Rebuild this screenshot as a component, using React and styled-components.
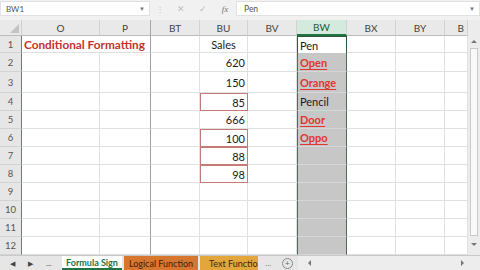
import React from "react";
import styled, { createGlobalStyle, css } from "styled-components";

const Global = createGlobalStyle`
  html, body { margin: 0; padding: 0; background: #ffffff; }
  body { width: 480px; height: 270px; overflow: hidden; font-family: Lato, "Liberation Sans", sans-serif; }
`;

const Page = styled.div`
  width: 480px;
  height: 270px;
  display: flex;
  flex-direction: column;
  background: #f1f1f1;
  overflow: hidden;
`;

const FormulaBar = styled.div`
  height: 20px;
  display: flex;
  align-items: flex-start;
  padding-top: 1px;
  box-sizing: border-box;
  background: #f1f1f1;
`;

const NameBox = styled.div`
  width: 150px;
  height: 15px;
  background: #ffffff;
  border: 1px solid #e2e2e2;
  box-sizing: border-box;
  display: flex;
  align-items: center;
  justify-content: space-between;
  padding: 0 4px 0 5px;
  font-size: 8px;
  color: #555;
`;

const Caret = styled.span`
  font-size: 6px;
  color: #777;
`;

const Tools = styled.div`
  width: 86px;
  height: 15px;
  display: flex;
  align-items: center;
  color: #b5b5b5;
  font-size: 9px;
`;

const Dots = styled.span`
  width: 20px;
  text-align: center;
  color: #c4c4c4;
  font-size: 8px;
`;

const Tool = styled.span`
  width: 22px;
  text-align: center;
  font-style: ${(p) => (p.$italic ? "italic" : "normal")};
  font-family: ${(p) => (p.$italic ? '"Liberation Serif", serif' : "inherit")};
  color: ${(p) => (p.$italic ? "#777" : "#bdbdbd")};
`;

const Input = styled.div`
  flex: 1;
  height: 15px;
  background: #ffffff;
  border: 1px solid #e2e2e2;
  box-sizing: border-box;
  display: flex;
  align-items: center;
  justify-content: space-between;
  padding: 0 4px 0 7px;
  font-size: 8.5px;
  color: #555;
`;

const SheetArea = styled.div`
  display: flex;
  height: 235px;
`;

const COLS = "22px 78px 51px 49px 48px 49px 50px 49px 49px 23px";
const ROWS = "16px 17px 19px 21px 18px 18px 18px 18px 18px 18px 18px 18px 18px";

const Grid = styled.div`
  width: 468px;
  display: grid;
  grid-template-columns: ${COLS};
  grid-template-rows: ${ROWS};
  background: #ffffff;
`;

const Corner = styled.div`
  background: #e9e9e9;
  border-right: 1px solid #cfcfcf;
  border-bottom: 1px solid #bdbdbd;
  position: relative;
  &::after {
    content: "";
    position: absolute;
    right: 2px;
    bottom: 2px;
    border-left: 9px solid transparent;
    border-bottom: 9px solid #c4c4c4;
  }
`;

const ColHead = styled.div`
  background: ${(p) => (p.$active ? "#d3eadc" : "#e9e9e9")};
  border-right: 1px solid ${(p) => (p.$frozen ? "#a8a8a8" : "#d2d2d2")};
  border-bottom: ${(p) => (p.$active ? "2px solid #217346" : "1px solid #bdbdbd")};
  box-sizing: border-box;
  display: flex;
  align-items: center;
  justify-content: ${(p) => (p.$left ? "flex-end" : "center")};
  padding-right: ${(p) => (p.$left ? "3px" : "0")};
  font-size: 10px;
  color: ${(p) => (p.$active ? "#1f5e38" : "#444")};
`;

const RowHead = styled.div`
  background: #e6e6e6;
  border-right: 1px solid #6f7a72;
  border-bottom: 1px solid #d2d2d2;
  box-sizing: border-box;
  display: flex;
  align-items: center;
  justify-content: center;
  font-size: 9.5px;
  color: #555;
`;

const Cell = styled.div`
  box-sizing: border-box;
  grid-column: span ${(p) => p.$span || 1};
  border-right: 1px solid ${(p) => (p.$frozen ? "#a0a0a0" : "#e0e0e0")};
  border-bottom: 1px solid ${(p) => (p.$selected ? "#d6d6d6" : "#e0e0e0")};
  background: ${(p) => (p.$selected ? "#c7c7c7" : "#ffffff")};
  display: flex;
  align-items: center;
  white-space: nowrap;
  overflow: hidden;
  font-size: 11px;
  color: #1a1a1a;
  padding: 0 2px;
  justify-content: ${(p) => (p.$align === "right" ? "flex-end" : p.$align === "center" ? "center" : "flex-start")};
  ${(p) =>
    p.$boxed &&
    css`
      border: 1px solid #c77b76;
    `}
  ${(p) =>
    p.$bw &&
    css`
      border-left: 1.5px solid #4d6b58;
      border-right: 1.5px solid #4d6b58;
    `}
  ${(p) =>
    p.$activeCell &&
    css`
      border: 1.5px solid #2d5a3d;
      border-bottom: none;
      background: #ffffff;
    `}
`;

const Title = styled.span`
  font-weight: 700;
  color: #c3332b;
  font-size: 11.8px;
`;

const RedWord = styled.span`
  font-weight: 700;
  color: #e0362f;
  text-decoration: underline;
  text-underline-offset: 2px;
`;

const VScroll = styled.div`
  width: 12px;
  background: #ececec;
  display: flex;
  flex-direction: column;
  align-items: center;
  padding-top: 17px;
  box-sizing: border-box;
`;

const Arrow = styled.div`
  width: 0;
  height: 0;
  margin: 3px 0;
  border-left: 3px solid transparent;
  border-right: 3px solid transparent;
  ${(p) =>
    p.$dir === "up"
      ? css`border-bottom: 3px solid #777;`
      : css`border-top: 3px solid #777;`}
`;

const Thumb = styled.div`
  width: 8px;
  height: 188px;
  background: #f9f9f9;
  border: 1px solid #c9c9c9;
  box-sizing: border-box;
  margin: 2px 0 4px;
`;

const TabBar = styled.div`
  height: 15px;
  display: flex;
  align-items: stretch;
  background: #e6e6e6;
  border-top: 1px solid #c9c9c9;
  box-sizing: border-box;
`;

const Nav = styled.div`
  width: 62px;
  display: flex;
  align-items: center;
  justify-content: space-around;
  padding: 0 4px;
  box-sizing: border-box;
  font-size: 7px;
  color: #444;
`;

const Tab = styled.div`
  width: ${(p) => p.$w}px;
  margin-right: 2px;
  background: ${(p) => p.$bg};
  display: flex;
  align-items: center;
  justify-content: ${(p) => (p.$clip ? "flex-start" : "center")};
  padding-left: ${(p) => (p.$clip ? "9px" : "0")};
  font-size: 9px;
  font-weight: ${(p) => (p.$active ? 700 : 400)};
  color: ${(p) => p.$fg};
  white-space: nowrap;
  overflow: hidden;
  box-sizing: border-box;
  ${(p) =>
    p.$active &&
    css`
      border-bottom: 2px solid #217346;
    `}
`;

const TabTools = styled.div`
  width: 38px;
  display: flex;
  align-items: center;
  justify-content: space-around;
  font-size: 8px;
  color: #777;
`;

const Plus = styled.span`
  width: 9px;
  height: 9px;
  border: 1px solid #888;
  border-radius: 50%;
  display: flex;
  align-items: center;
  justify-content: center;
  font-size: 8px;
  line-height: 1;
  color: #666;
`;

const HScroll = styled.div`
  flex: 1;
  display: flex;
  align-items: center;
  justify-content: space-between;
  padding: 0 16px 0 10px;
  background: #ededed;
`;

const HArrow = styled.div`
  width: 0;
  height: 0;
  border-top: 3px solid transparent;
  border-bottom: 3px solid transparent;
  ${(p) =>
    p.$dir === "left"
      ? css`border-right: 3px solid #777;`
      : css`border-left: 3px solid #777;`}
`;

const colNames = ["O", "P", "BT", "BU", "BV", "BW", "BX", "BY", "B"];

const data = {
  1: { O: { v: <Title>Conditional Formatting</Title>, span: 2 }, BU: { v: "Sales", align: "center" }, BW: "Pen" },
  2: { BU: { v: "620", align: "right" }, BW: <RedWord>Open</RedWord> },
  3: { BU: { v: "150", align: "right" }, BW: <RedWord>Orange</RedWord> },
  4: { BU: { v: "85", align: "right", boxed: true }, BW: "Pencil" },
  5: { BU: { v: "666", align: "right" }, BW: <RedWord>Door</RedWord> },
  6: { BU: { v: "100", align: "right", boxed: true }, BW: <RedWord>Oppo</RedWord> },
  7: { BU: { v: "88", align: "right", boxed: true } },
  8: { BU: { v: "98", align: "right", boxed: true } },
};

function renderRow(row) {
  const cells = [];
  for (let i = 0; i < colNames.length; i++) {
    const col = colNames[i];
    const entry = data[row] ? data[row][col] : undefined;
    let content = null;
    let align = "left";
    let boxed = false;
    let span = 1;
    if (entry && typeof entry === "object" && "v" in entry) {
      content = entry.v;
      align = entry.align || "left";
      boxed = entry.boxed;
      span = entry.span || 1;
    } else if (entry) {
      content = entry;
    }
    const isBW = col === "BW";
    const lastCol = colNames[i + span - 1];
    cells.push(
      <Cell
        key={`${row}-${col}`}
        $span={span}
        $align={align}
        $boxed={boxed}
        $frozen={lastCol === "P"}
        $selected={isBW && row > 1}
        $bw={isBW && row > 1}
        $activeCell={isBW && row === 1}
      >
        {content}
      </Cell>
    );
    i += span - 1;
  }
  return cells;
}

export default function App() {
  const rows = Array.from({ length: 12 }, (_, i) => i + 1);
  return (
    <Page>
      <Global />
      <FormulaBar>
        <NameBox>
          <span>BW1</span>
          <Caret>▼</Caret>
        </NameBox>
        <Tools>
          <Dots>⋮</Dots>
          <Tool>✕</Tool>
          <Tool>✓</Tool>
          <Tool $italic>fx</Tool>
        </Tools>
        <Input>
          <span>Pen</span>
          <Caret>▼</Caret>
        </Input>
      </FormulaBar>
      <SheetArea>
        <Grid>
          <Corner />
          {colNames.map((c, i) => (
            <ColHead key={c} $active={c === "BW"} $frozen={c === "P"} $left={i === colNames.length - 1}>
              {c}
            </ColHead>
          ))}
          {rows.map((r) => (
            <React.Fragment key={r}>
              <RowHead>{r}</RowHead>
              {renderRow(r)}
            </React.Fragment>
          ))}
        </Grid>
        <VScroll>
          <Arrow $dir="up" />
          <Thumb />
          <Arrow $dir="down" />
        </VScroll>
      </SheetArea>
      <TabBar>
        <Nav>
          <span>◀</span>
          <span>▶</span>
          <span>…</span>
        </Nav>
        <Tab $w={60} $bg="#ffffff" $fg="#217346" $active>Formula Sign</Tab>
        <Tab $w={74} $bg="#d7762f" $fg="#3d2410">Logical Function</Tab>
        <Tab $w={58} $bg="#e3a63b" $fg="#3d2a10" $clip>Text Function</Tab>
        <TabTools>
          <span>…</span>
          <Plus>+</Plus>
        </TabTools>
        <HScroll>
          <HArrow $dir="left" />
          <HArrow $dir="right" />
        </HScroll>
      </TabBar>
    </Page>
  );
}
